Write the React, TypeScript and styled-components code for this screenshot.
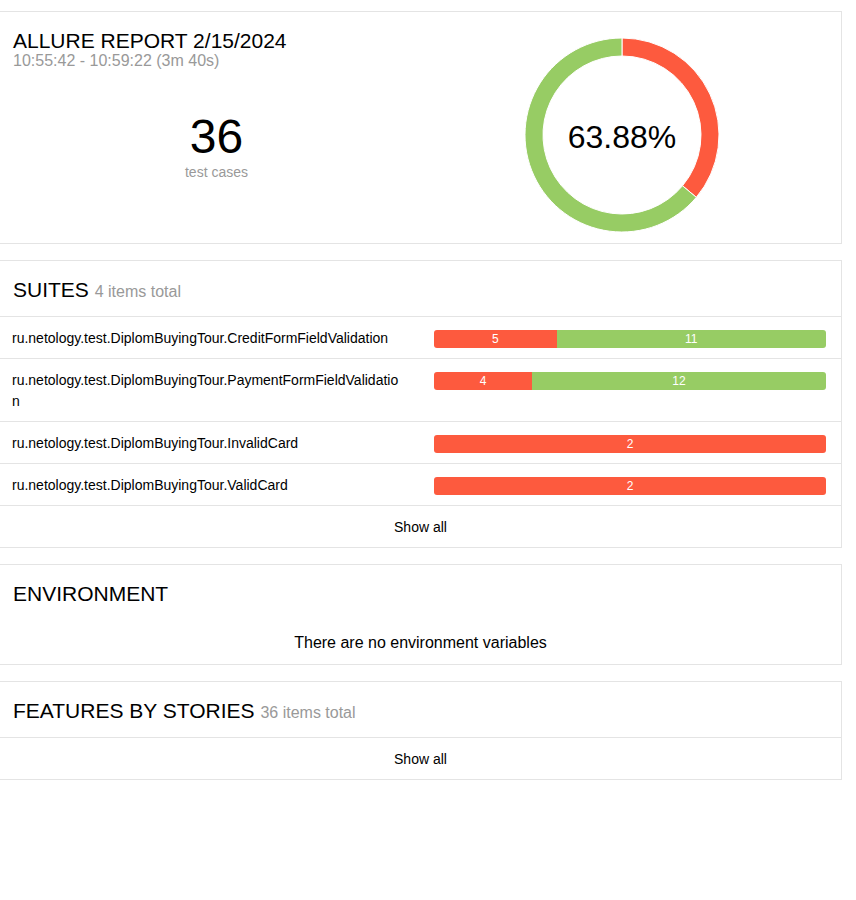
import React from "react";
import styled, { createGlobalStyle } from "styled-components";

const Global = createGlobalStyle`
  html, body { margin: 0; padding: 0; background: #fff; }
  body { font-family: "Liberation Sans", Arial, sans-serif; color: #000; }
`;

const Page = styled.div`
  padding-top: 11px;
  display: flex;
  flex-direction: column;
  gap: 16px;
`;

const Card = styled.section`
  margin-left: -1px;
  width: 843px;
  box-sizing: border-box;
  border: 1px solid #e4e4e4;
  background: #fff;
`;

const SummaryGrid = styled.div`
  display: grid;
  grid-template-columns: 433px 1fr;
  height: 231px;
`;

const SummaryLeft = styled.div`
  display: flex;
  flex-direction: column;
`;

const ReportTitle = styled.h1`
  margin: 0;
  padding: 18px 0 0 13px;
  font-size: 21px;
  line-height: 22px;
  font-weight: normal;
`;

const ReportSub = styled.div`
  margin-top: 1px;
  padding-left: 13px;
  font-size: 16px;
  line-height: 16px;
  color: #999;
`;

const BigStat = styled.div`
  margin-top: 44px;
  display: flex;
  flex-direction: column;
  align-items: center;
`;

const BigNumber = styled.div`
  font-size: 48px;
  line-height: 48px;
`;

const BigLabel = styled.div`
  font-size: 14px;
  line-height: 16px;
  color: #999;
  margin-top: 3px;
`;

const ChartCell = styled.div`
  display: flex;
  justify-content: center;
  padding-right: 30px;
  padding-top: 23px;
`;

const Donut = styled.div`
  position: relative;
  width: 200px;
  height: 200px;
`;

const DonutLabel = styled.div`
  position: absolute;
  inset: 0;
  display: flex;
  align-items: center;
  justify-content: center;
  font-size: 32px;
  padding-top: 4px;
  box-sizing: border-box;
`;

const Header = styled.div<{ $line?: boolean }>`
  padding: 16px 13px 14px;
  font-size: 21px;
  line-height: 25px;
  border-bottom: 1px solid ${(p) => (p.$line === false ? "transparent" : "#e4e4e4")};
`;

const Muted = styled.span`
  font-size: 16px;
  line-height: 1;
  color: #999;
`;

const Row = styled.div`
  display: grid;
  grid-template-columns: 420px 1fr;
  border-bottom: 1px solid #e4e4e4;
`;

const RowName = styled.div`
  padding: 11px 15px 9px 12px;
  font-size: 14px;
  line-height: 21px;
  word-break: break-all;
`;

const BarCell = styled.div`
  padding: 13px 15px 0 14px;
`;

const Bar = styled.div`
  display: flex;
  height: 18px;
  border-radius: 3px;
  overflow: hidden;
`;

const Segment = styled.div<{ $kind: "failed" | "passed" }>`
  background: ${(p) => (p.$kind === "failed" ? "#fd5a3e" : "#97cc64")};
  color: #fff;
  font-size: 12px;
  line-height: 18px;
  text-align: center;
`;

const ShowAll = styled.div`
  text-align: center;
  font-size: 14px;
  line-height: 21px;
  padding: 11px 0 9px;
`;

const EnvBody = styled.div`
  text-align: center;
  font-size: 16px;
  line-height: 20px;
  padding: 12px 0 11px;
`;

const suites = [
  { name: "ru.netology.test.DiplomBuyingTour.CreditFormFieldValidation", failed: 5, passed: 11 },
  { name: "ru.netology.test.DiplomBuyingTour.PaymentFormFieldValidation", failed: 4, passed: 12 },
  { name: "ru.netology.test.DiplomBuyingTour.InvalidCard", failed: 2, passed: 0 },
  { name: "ru.netology.test.DiplomBuyingTour.ValidCard", failed: 2, passed: 0 },
];

function arc(a0: number, a1: number, R: number, r: number, cx = 100, cy = 100) {
  const p = (a: number, rad: number) =>
    `${(cx + rad * Math.sin(a)).toFixed(3)} ${(cy - rad * Math.cos(a)).toFixed(3)}`;
  const large = a1 - a0 > Math.PI ? 1 : 0;
  return `M${p(a0, R)} A${R} ${R} 0 ${large} 1 ${p(a1, R)} L${p(a1, r)} A${r} ${r} 0 ${large} 0 ${p(a0, r)} Z`;
}

function DonutChart() {
  const failedFrac = 13 / 36;
  const split = failedFrac * Math.PI * 2;
  return (
    <Donut>
      <svg width="200" height="200" viewBox="0 0 200 200">
        <path d={arc(0, split, 97, 79)} fill="#fd5a3e" stroke="#fff" strokeWidth="1" />
        <path d={arc(split, Math.PI * 2 - 0.0001, 97, 79)} fill="#97cc64" stroke="#fff" strokeWidth="1" />
      </svg>
      <DonutLabel>63.88%</DonutLabel>
    </Donut>
  );
}

export default function App() {
  return (
    <>
      <Global />
      <Page>
        <Card>
          <SummaryGrid>
            <SummaryLeft>
              <ReportTitle>ALLURE REPORT 2/15/2024</ReportTitle>
              <ReportSub>10:55:42 - 10:59:22 (3m 40s)</ReportSub>
              <BigStat>
                <BigNumber>36</BigNumber>
                <BigLabel>test cases</BigLabel>
              </BigStat>
            </SummaryLeft>
            <ChartCell>
              <DonutChart />
            </ChartCell>
          </SummaryGrid>
        </Card>

        <Card>
          <Header>
            SUITES <Muted>4 items total</Muted>
          </Header>
          {suites.map((s) => {
            const total = s.failed + s.passed;
            return (
              <Row key={s.name}>
                <RowName>{s.name}</RowName>
                <BarCell>
                  <Bar>
                    {s.failed > 0 && (
                      <Segment $kind="failed" style={{ width: `${(s.failed / total) * 100}%` }}>
                        {s.failed}
                      </Segment>
                    )}
                    {s.passed > 0 && (
                      <Segment $kind="passed" style={{ width: `${(s.passed / total) * 100}%` }}>
                        {s.passed}
                      </Segment>
                    )}
                  </Bar>
                </BarCell>
              </Row>
            );
          })}
          <ShowAll>Show all</ShowAll>
        </Card>

        <Card>
          <Header $line={false}>ENVIRONMENT</Header>
          <EnvBody>There are no environment variables</EnvBody>
        </Card>

        <Card>
          <Header>
            FEATURES BY STORIES <Muted>36 items total</Muted>
          </Header>
          <ShowAll>Show all</ShowAll>
        </Card>
      </Page>
    </>
  );
}
